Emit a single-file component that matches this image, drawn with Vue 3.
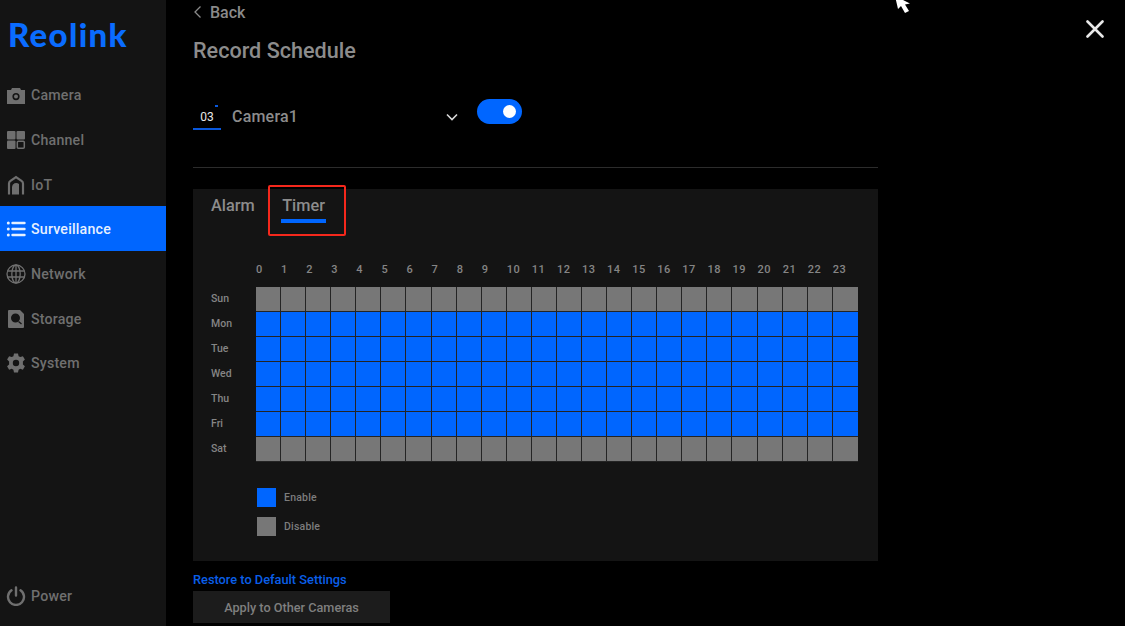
<script setup>
const navTop = [
  { label: 'Camera', icon: 'camera' },
  { label: 'Channel', icon: 'channel' },
  { label: 'IoT', icon: 'iot' },
  { label: 'Surveillance', icon: 'list', active: true },
  { label: 'Network', icon: 'globe' },
  { label: 'Storage', icon: 'storage' },
  { label: 'System', icon: 'gear' },
]
const hours = Array.from({ length: 24 }, (_, i) => i)
const days = [
  { name: 'Sun', on: false },
  { name: 'Mon', on: true },
  { name: 'Tue', on: true },
  { name: 'Wed', on: true },
  { name: 'Thu', on: true },
  { name: 'Fri', on: true },
  { name: 'Sat', on: false },
]
</script>

<template>
  <div class="page">
    <aside class="sidebar">
      <div class="logo">Reolink</div>
      <nav class="nav">
        <div v-for="item in navTop" :key="item.label" class="nav-item" :class="{ active: item.active }">
          <svg class="nav-icon" viewBox="0 0 20 20">
            <template v-if="item.icon === 'camera'">
              <path fill-rule="evenodd" fill="currentColor" d="M1 5h4l1-2h8l1 2h4v14H1zM10 8a3.6 3.6 0 1 0 0 7.200a3.600 3.600 0 0 0 0-7.200z" />
              <circle cx="10" cy="11.600" r="2" fill="currentColor" />
            </template>
            <template v-else-if="item.icon === 'channel'">
              <rect x="1" y="1" width="8.500" height="8.500" rx="1" fill="currentColor" />
              <rect x="10.500" y="1" width="8.500" height="8.500" rx="1" fill="currentColor" />
              <rect x="1" y="10.500" width="8.500" height="8.500" rx="1" fill="currentColor" />
              <rect x="11.300" y="11.300" width="7" height="7" rx="1" fill="none" stroke="currentColor" stroke-width="1.500" />
            </template>
            <template v-else-if="item.icon === 'iot'">
              <path fill="none" stroke="currentColor" stroke-width="2.200" d="M3 19.500V8.500Q3 6.800 4.500 5.800L10 2l5.500 3.800Q17 6.800 17 8.500V19.500" />
              <path fill="currentColor" d="M6 19.500v-7.500a4.200 4.200 0 0 1 7-3V19.500z" />
            </template>
            <template v-else-if="item.icon === 'list'">
              <circle cx="2.300" cy="4" r="1.500" fill="currentColor" />
              <circle cx="2.300" cy="10" r="1.500" fill="currentColor" />
              <circle cx="2.300" cy="16" r="1.500" fill="currentColor" />
              <path stroke="currentColor" stroke-width="2.400" stroke-linecap="round" d="M6.500 4h12M6.500 10h12M6.500 16h12" />
            </template>
            <template v-else-if="item.icon === 'globe'">
              <g fill="none" stroke="currentColor" stroke-width="1.300">
                <circle cx="10" cy="10" r="9" />
                <ellipse cx="10" cy="10" rx="4.200" ry="9" />
                <path d="M10 1v18M1.500 7h17M1.500 13h17" />
              </g>
            </template>
            <template v-else-if="item.icon === 'storage'">
              <path fill-rule="evenodd" fill="currentColor" d="M3 1h11l4 4v13a1 1 0 0 1-1 1H3a1 1 0 0 1-1-1V2a1 1 0 0 1 1-1zM9.500 4.500a4.500 4.500 0 1 0 0 9 4.500 4.500 0 0 0 0-9z" />
              <path stroke="#141414" stroke-width="1.300" d="M12.500 12.500l3 2.500" />
            </template>
            <template v-else>
              <path fill-rule="evenodd" fill="currentColor" d="M8 .5h4l.6 2.700 1.700.9 2.600-.9 2 3.400-2 1.900v2.900l2 1.900-2 3.400-2.600-.9-1.700.9-.6 2.700H8l-.6-2.700-1.700-.9-2.600.9-2-3.400 2-1.900V8.500l-2-1.900 2-3.400 2.600.9 1.700-.9zM10 6.800a3.200 3.200 0 1 0 0 6.400 3.200 3.200 0 0 0 0-6.400z" />
            </template>
          </svg>
          <span>{{ item.label }}</span>
        </div>
      </nav>
      <div class="nav-item power">
        <svg class="nav-icon" viewBox="0 0 20 20">
          <path fill="none" stroke="currentColor" stroke-width="2.400" stroke-linecap="round" d="M10 1.500v8M5.500 4.300a8 8 0 1 0 9 0" />
        </svg>
        <span>Power</span>
      </div>
    </aside>

    <main class="main">
      <div class="back">
        <svg class="back-icon" viewBox="0 0 10 14">
          <path fill="none" stroke="currentColor" stroke-width="1.300" d="M7.500 1.500L2 7l5.500 5.500" />
        </svg>
        <span>Back</span>
      </div>
      <h1 class="title">Record Schedule</h1>

      <div class="camera-row">
        <div class="channel-badge">03<i class="badge-dot"></i></div>
        <span class="camera-name">Camera1</span>
        <svg class="chevron" viewBox="0 0 14 10">
          <path fill="none" stroke="currentColor" stroke-width="1.600" d="M2 2.500L7 7.500l5-5" />
        </svg>
        <div class="toggle"><i class="knob"></i></div>
      </div>
      <div class="divider"></div>

      <section class="panel">
        <div class="tabs">
          <span class="tab">Alarm</span>
          <span class="tab tab-active">Timer</span>
          <i class="highlight"></i>
        </div>

        <div class="schedule">
          <div class="hours">
            <span v-for="h in hours" :key="h" class="hour">{{ h }}</span>
          </div>
          <div v-for="d in days" :key="d.name" class="day">
            <span class="day-name">{{ d.name }}</span>
            <div class="cells">
              <i v-for="h in hours" :key="h" class="cell" :class="d.on ? 'on' : 'off'"></i>
            </div>
          </div>
        </div>

        <div class="legend">
          <div class="legend-row"><i class="swatch on"></i><span>Enable</span></div>
          <div class="legend-row"><i class="swatch off"></i><span>Disable</span></div>
        </div>
      </section>

      <a class="restore">Restore to Default Settings</a>
      <button class="apply">Apply to Other Cameras</button>
    </main>

    <svg class="cursor" viewBox="0 0 20 20">
      <path fill="#fff" d="M1 0l3 13 3-3 4 7 4-2-4-6.500 5-1z" />
    </svg>
    <svg class="close" viewBox="0 0 18 18">
      <path stroke="#e8e8e8" stroke-width="2.600" stroke-linecap="round" d="M1.500 1.500l15 15M16.500 1.500l-15 15" />
    </svg>
  </div>
</template>

<style scoped>
.page {
  position: relative;
  display: flex;
  width: 1125px;
  height: 626px;
  overflow: hidden;
  background: #000;
  font-family: Roboto, "Liberation Sans", sans-serif;
}
.sidebar {
  display: flex;
  flex-direction: column;
  width: 166px;
  flex: none;
  background: #141414;
}
.logo {
  height: 72px;
  padding: 15px 0 0 8px;
  box-sizing: border-box;
  color: #0a6cff;
  font-family: Lato, Roboto, sans-serif;
  font-size: 33px;
  line-height: 38px;
  font-weight: 900;
  letter-spacing: 1.300px;
}
.nav {
  display: flex;
  flex-direction: column;
  flex: 1;
}
.nav-item {
  display: flex;
  align-items: center;
  gap: 5px;
  height: 44.700px;
  padding: 2px 0 0 6px;
  box-sizing: border-box;
  color: #6f6f6f;
  font-size: 14.200px;
  font-weight: 500;
  letter-spacing: 0.2px;
}
.nav-item.active {
  background: #0066ff;
  color: #e6f0ff;
}
.nav-icon {
  width: 20px;
  height: 20px;
  flex: none;
}
.power {
  margin-bottom: 9px;
}
.main {
  display: flex;
  flex-direction: column;
  width: 685px;
  margin-left: 27px;
}
.back {
  display: flex;
  align-items: center;
  gap: 7px;
  height: 24px;
  color: #8a8a8a;
  font-size: 16px;
  font-weight: 500;
}
.back-icon {
  width: 10px;
  height: 14px;
}
.title {
  margin: 14px 0 0;
  color: #8c8c8c;
  font-size: 21.600px;
  line-height: 26px;
  font-weight: 500;
}
.camera-row {
  display: flex;
  align-items: center;
  height: 30px;
  margin-top: 38px;
}
.channel-badge {
  position: relative;
  width: 28px;
  height: 26px;
  box-sizing: border-box;
  border-bottom: 2px solid #0a58dc;
  color: #e8e8e8;
  font-size: 12px;
  line-height: 26px;
  text-align: center;
  flex: none;
}
.badge-dot {
  position: absolute;
  top: 1px;
  right: 3px;
  width: 3px;
  height: 2px;
  background: #0a58dc;
}
.camera-name {
  margin: 0 0 1px 11px;
  color: #8c8c8c;
  font-size: 16px;
  font-weight: 500;
  letter-spacing: 0.2px;
}
.chevron {
  width: 14px;
  height: 10px;
  margin-left: 147px;
  color: #d8d8d8;
}
.toggle {
  position: relative;
  width: 45px;
  height: 25px;
  margin: -11px 0 0 18px;
  border-radius: 13px;
  background: #0066ff;
}
.knob {
  position: absolute;
  top: 6px;
  right: 6px;
  width: 13px;
  height: 13px;
  border-radius: 50%;
  background: #fff;
}
.divider {
  height: 1px;
  margin-top: 35px;
  background: #2c2c2c;
}
.panel {
  position: relative;
  display: flex;
  flex-direction: column;
  height: 372px;
  margin-top: 21px;
  background: #141414;
}
.tabs {
  position: relative;
  display: flex;
  gap: 26px;
  height: 73px;
  padding: 6px 0 0 18px;
  box-sizing: border-box;
}
.tab {
  color: #8c8c8c;
  font-size: 16.300px;
  line-height: 22px;
  font-weight: 500;
}
.tab-active {
  height: 28px;
  padding: 0 1.500px;
  background: linear-gradient(#0066ff, #0066ff) no-repeat 0 100% / 100% 4.500px;
}
.highlight {
  position: absolute;
  left: 75px;
  top: -4px;
  width: 78px;
  height: 51px;
  box-sizing: border-box;
  border: 2.500px solid #f5281c;
  border-radius: 2px;
}
.schedule {
  display: flex;
  flex-direction: column;
  font-size: 10.500px;
  font-weight: 500;
  color: #858585;
}
.hours {
  display: flex;
  height: 25px;
  margin-left: 63px;
  font-size: 11px;
  letter-spacing: 0.5px;
}
.hour {
  width: 25.080px;
  line-height: 16px;
}
.day {
  display: flex;
  align-items: center;
  height: 25px;
}
.day-name {
  width: 63px;
  padding: 0 0 2px 18px;
  box-sizing: border-box;
  flex: none;
}
.cells {
  display: flex;
}
.cell {
  width: 25.080px;
  height: 25px;
  box-sizing: border-box;
  border-right: 1px solid #242424;
  border-bottom: 1px solid #242424;
  flex: none;
}
.cell:last-child {
  border-right: 0;
}
.on {
  background: #0066ff;
}
.off {
  background: #777;
}
.legend {
  display: flex;
  flex-direction: column;
  gap: 10px;
  margin: 26px 0 0 64px;
}
.legend-row {
  display: flex;
  align-items: center;
  gap: 8px;
  color: #7d7d7d;
  font-size: 10.500px;
  font-weight: 500;
  letter-spacing: 0.2px;
}
.swatch {
  width: 19px;
  height: 19px;
}
.restore {
  margin-top: 12px;
  color: #0a5fe8;
  font-size: 12.800px;
  line-height: 14px;
  font-weight: 500;
}
.apply {
  width: 197px;
  height: 32px;
  margin-top: 4px;
  padding: 0;
  border: 0;
  background: #1c1c1c;
  color: #7f7f7f;
  font-family: inherit;
  font-size: 12.700px;
  font-weight: 500;
}
.cursor {
  position: absolute;
  left: 894px;
  top: -4px;
  width: 20px;
  height: 20px;
}
.close {
  position: absolute;
  left: 1086px;
  top: 20px;
  width: 18px;
  height: 18px;
}
</style>
